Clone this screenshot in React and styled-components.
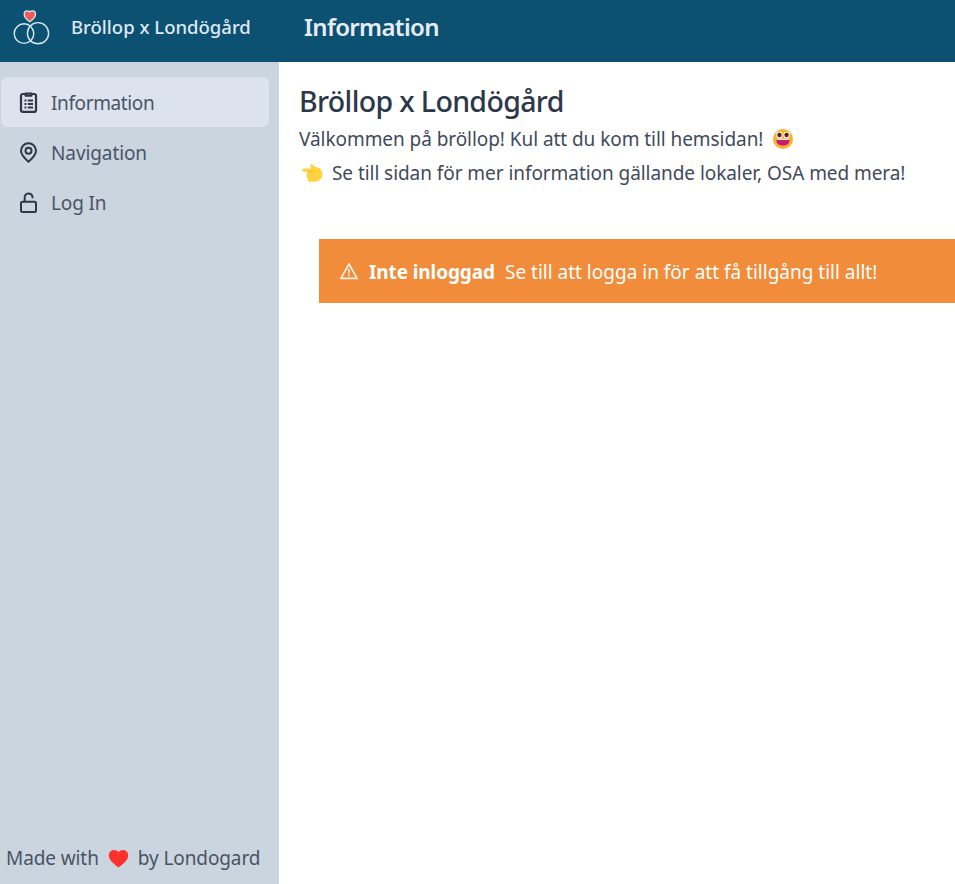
import React from 'react';
import styled, { createGlobalStyle } from 'styled-components';

const GlobalStyle = createGlobalStyle`
  *, *::before, *::after { box-sizing: border-box; }
  body {
    margin: 0;
    overflow: hidden;
    background: #fff;
    color: #3f4a5b;
    font: 400 19px/34px "Noto Sans", "Open Sans", sans-serif;
  }
  svg { display: block; flex: none; }
  h1, p { margin: 0; }
`;

const Page = styled.div`
  display: flex;
  flex-direction: column;
  height: 100vh;
  white-space: nowrap;
`;

const Header = styled.header`
  display: flex;
  height: 62px;
  padding-bottom: 8px;
  align-items: center;
  background: #0c5172;
`;

const Brand = styled.div`
  display: flex;
  align-items: center;
  width: 279px;
  padding-left: 12px;
  gap: 20px;
  color: #dfe8f2;
  font-size: 18.5px;
  font-weight: 500;
`;

const PageTitle = styled.div`
  padding-left: 25px;
  color: #e6edf6;
  font-size: 24px;
  font-weight: 600;
  letter-spacing: -0.65px;
`;

const Body = styled.div`
  display: flex;
  flex: 1;
  min-height: 0;
`;

const Sidebar = styled.aside`
  display: flex;
  flex-direction: column;
  justify-content: space-between;
  width: 279px;
  padding: 15px 10px 9px 1px;
  background: #cbd5df;
`;

const NavItem = styled.a`
  display: flex;
  align-items: center;
  height: 50px;
  padding: 2px 0 0 16px;
  gap: 10px;
  border-radius: 7px;
  background: ${(p) => (p.$active ? '#dce3ed' : 'transparent')};
  color: #4a5466;
  letter-spacing: ${(p) => p.$tracking || 0}px;

  svg { color: #2d3748; }
`;

const Credit = styled.div`
  display: flex;
  align-items: center;
  padding-left: 5px;
  gap: 9px;
  color: #485365;
  letter-spacing: -0.1px;
`;

const Main = styled.main`
  flex: 1;
  min-width: 0;
  padding: 19px 0 0 20px;
`;

const Heading = styled.h1`
  color: #2d3748;
  font-size: 28.5px;
  font-weight: 500;
  line-height: 41px;
  letter-spacing: -0.65px;
`;

const Line = styled.p`
  display: flex;
  align-items: center;
  padding-left: ${(p) => p.$indent || 0}px;
  gap: 8px;
  letter-spacing: -0.06px;
`;

const LongLine = styled.span`
  margin-right: 1px;
`;

const Alert = styled.div`
  display: flex;
  align-items: center;
  height: 64px;
  margin: 49px 0 0 20px;
  padding: 1px 0 0 20px;
  gap: 10px;
  background: #f08c3a;
  color: #fff;
`;

const AlertTitle = styled.strong`
  font-weight: 700;
  letter-spacing: -0.1px;
`;

const Rings = () => (
  <svg width="39" height="38" viewBox="0 0 39 38" fill="none" stroke="#d6e8f0" strokeWidth="1.4">
    <circle cx="12" cy="25.6" r="9.8" />
    <circle cx="26" cy="25.2" r="10.6" />
    <path d="M17.800 13.800C14.600 11.600 12.200 9 12.200 6.200c0-2.100 1.100-3.400 2.700-3.400 1.200 0 2.200.3 2.900 1 .7-.7 1.700-1 2.900-1 1.600 0 2.800 1.300 2.800 3.400 0 2.800-2.500 5.400-5.700 7.600Z" fill="#ee5b58" strokeWidth="1.3" />
  </svg>
);

const Clipboard = () => (
  <svg width="24" height="24" viewBox="0 0 24 24" fill="none" stroke="currentColor" strokeWidth="2.2">
    <rect x="4" y="3" width="15" height="17.800" rx="1.800" />
    <path d="M8.500 2.500v2.300h6V2.500Z" fill="#dce3ed" strokeLinejoin="round" strokeWidth="2" />
    <path d="M7.500 9.500h1.900M7.500 13h1.900M7.500 16.500h1.900M10.800 9.500h5.200M10.800 13h5.200M10.800 16.500h5.200" strokeWidth="1.800" />
  </svg>
);

const Pin = () => (
  <svg width="24" height="24" viewBox="0 0 24 24" fill="none" stroke="currentColor" strokeWidth="2">
    <path d="M11.5 20.800C7.200 17.100 4 13.400 4 9.800a7.500 7.500 0 0 1 15 0c0 3.600-3.200 7.300-7.500 11Z" strokeLinejoin="round" />
    <circle cx="11.5" cy="9.800" r="3" />
  </svg>
);

const Unlock = () => (
  <svg width="24" height="24" viewBox="0 0 24 24" fill="none" stroke="currentColor" strokeWidth="2">
    <rect x="4" y="10.800" width="15" height="10.200" rx="1.500" />
    <path d="M7.700 10.800V6.600a3.900 3.900 0 0 1 7.800-.6v1.200" />
  </svg>
);

const Warning = () => (
  <svg width="20" height="20" viewBox="0 0 20 20" fill="none" stroke="#fff0e2" strokeLinejoin="round">
    <path d="M10 2 2 16.400h16Z" strokeWidth="1.700" />
    <path d="M10 7v4.400M10 12.600v1.700" strokeWidth="1.600" />
  </svg>
);

const Heart = () => (
  <svg width="21" height="20" viewBox="0 0 21 20">
    <path d="M10.5 19.500C6.500 16.400 .8 12.300.8 7.500.8 4.300 3 2 5.800 2c2 0 3.700.8 4.700 2.200C11.500 2.800 13.200 2 15.200 2c2.800 0 5 2.300 5 5.500 0 4.800-5.700 8.900-9.700 12Z" fill="#ff302e" />
  </svg>
);

const Smiley = () => (
  <svg width="22" height="22" viewBox="0 0 22 22">
    <circle cx="11" cy="11" r="10" fill="#ffad2c" />
    <rect x="4.200" y="3.800" width="6.300" height="6.200" rx="2.300" fill="#fff1d9" />
    <rect x="11.500" y="3.800" width="6.300" height="6.200" rx="2.300" fill="#fff1d9" />
    <rect x="5.500" y="4.800" width="3.900" height="4.200" rx="1.500" fill="#40272c" />
    <rect x="12.600" y="4.800" width="3.900" height="4.200" rx="1.500" fill="#40272c" />
    <path d="M4.500 11h13v1.500c0 3.100-2.700 5-6.500 5s-6.500-1.900-6.500-5Z" fill="#c21c78" />
    <path d="M4.700 10.700h12.600v1.300H4.700Z" fill="#fff4ea" />
  </svg>
);

const PointLeft = () => (
  <svg width="22" height="20" viewBox="0 0 22 20">
    <path d="M1.800 5.400h7.400l-.9-2.700C7.900 1.200 10 .6 11 1.800l2 2.300c4.300.1 7.400 2.500 7.400 6.900 0 4.700-3.300 7.700-7.900 7.700H8.200c-1.700 0-2.500-1.200-2.100-2.400-1-.6-1.300-1.700-.8-2.700-.9-.7-1.100-1.900-.5-2.900l.7-1.900H1.800c-1.900 0-1.900-3.400 0-3.400Z" fill="#ffd33e" />
    <path d="M5.500 8.800h5.800" fill="none" stroke="#f2b83a" strokeWidth="1" />
  </svg>
);

const items = [
  { label: 'Information', Icon: Clipboard, active: true, tracking: -0.38 },
  { label: 'Navigation', Icon: Pin, tracking: -0.1 },
  { label: 'Log In', Icon: Unlock, tracking: -0.15 },
];

export default function App() {
  return (
    <Page>
      <GlobalStyle />
      <Header>
        <Brand><Rings /><span>Bröllop x Londögård</span></Brand>
        <PageTitle>Information</PageTitle>
      </Header>
      <Body>
        <Sidebar>
          <nav>
            {items.map(({ label, Icon, active, tracking }) => (
              <NavItem key={label} $active={active} $tracking={tracking}><Icon /><span>{label}</span></NavItem>
            ))}
          </nav>
          <Credit><span>Made with</span><Heart /><span>by Londogard</span></Credit>
        </Sidebar>
        <Main>
          <Heading>Bröllop x Londögård</Heading>
          <Line><LongLine>Välkommen på bröllop! Kul att du kom till hemsidan!</LongLine><Smiley /></Line>
          <Line $indent={3}><PointLeft /><span>Se till sidan för mer information gällande lokaler, OSA med mera!</span></Line>
          <Alert>
            <Warning />
            <AlertTitle>Inte inloggad</AlertTitle>
            <span>Se till att logga in för att få tillgång till allt!</span>
          </Alert>
        </Main>
      </Body>
    </Page>
  );
}
